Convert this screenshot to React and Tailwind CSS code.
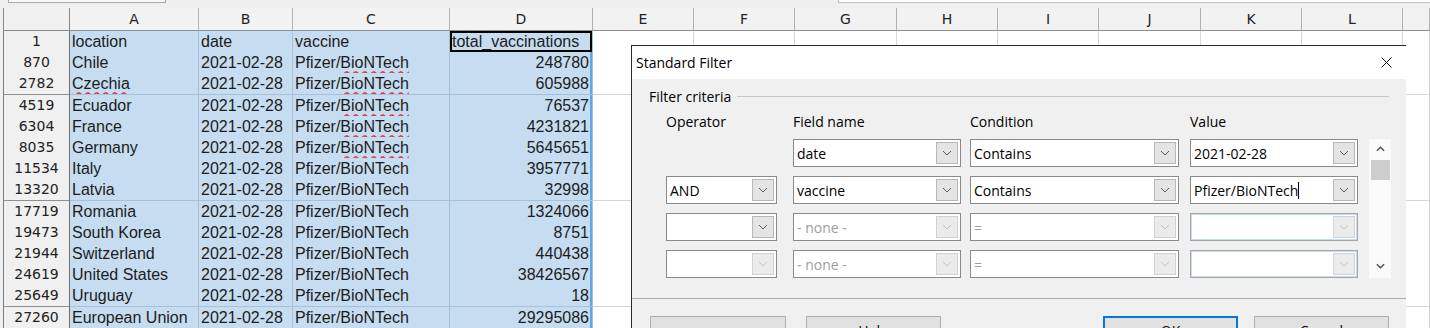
import React from 'react';

const COLS =
  'grid grid-cols-[67px_129px_94px_157px_143px_101px_101px_102px_101px_101px_102px_101px_101px_1fr]';

const LETTERS = ['A', 'B', 'C', 'D', 'E', 'F', 'G', 'H', 'I', 'J', 'K', 'L', ''];

// rows are ~21.2px tall in the shot, so every fifth one gets an extra pixel
const HEIGHTS = ['h-[21px]', 'h-[21px]', 'h-[22px]', 'h-[21px]', 'h-[21px]', 'h-[21px]', 'h-[21px]',
  'h-[22px]', 'h-[21px]', 'h-[21px]', 'h-[21px]', 'h-[21px]', 'h-[22px]', 'h-[21px]'];

const DATA = [
  { n: '870', loc: 'Chile', total: '248780', spell: true },
  { n: '2782', loc: 'Czechia', total: '605988', spell: true, locSpell: true },
  { n: '4519', loc: 'Ecuador', total: '76537', spell: true },
  { n: '6304', loc: 'France', total: '4231821', spell: true },
  { n: '8035', loc: 'Germany', total: '5645651', spell: true },
  { n: '11534', loc: 'Italy', total: '3957771' },
  { n: '13320', loc: 'Latvia', total: '32998' },
  { n: '17719', loc: 'Romania', total: '1324066' },
  { n: '19473', loc: 'South Korea', total: '8751' },
  { n: '21944', loc: 'Switzerland', total: '440438' },
  { n: '24619', loc: 'United States', total: '38426567' },
  { n: '25649', loc: 'Uruguay', total: '18' },
  { n: '27260', loc: 'European Union', total: '29295086' },
];

const SEL = 'bg-[#c6dcf0] border-r border-b border-[#a9c1d8] flex items-center px-[2px] overflow-hidden whitespace-nowrap';
const WAVY = 'underline decoration-wavy decoration-[#e0393e] underline-offset-[3px]';

function RowHead({ children }) {
  return (
    <div className="bg-[#f0f0f0] border-l border-b border-r border-l-[#7a7a7a] border-b-[#8f8f8f] border-r-[#6f6f6f] flex items-center justify-center font-['DejaVu_Sans',sans-serif] text-[14px] text-[#222]">
      {children}
    </div>
  );
}

function BlankCells() {
  return Array.from({ length: 9 }).map((_, i) => (
    <div key={i} className="bg-white border-r border-b border-[#d6d6d6]" />
  ));
}

function Chevron({ color = '#5e5e5e', up = false, w = 10, sw = 1 }) {
  return (
    <svg width={w} height="6" viewBox="0 0 10 6" fill="none">
      <polyline
        points={up ? '1,5 5,1 9,5' : '1,1 5,5 9,1'}
        stroke={color}
        strokeWidth={sw}
      />
    </svg>
  );
}

function Combo({ value, width, muted, disabled, blue, caret }) {
  return (
    <div
      className={`${width} h-[28px] flex bg-white border ${
        blue ? 'border-[#a6a6a6] shadow-[inset_0_0_0_1px_#c8dbf1]' : 'border-[#8a8a8a]'
      }`}
    >
      <div className={`flex-1 flex items-center pl-[3px] ${muted ? 'text-[#9d9d9d]' : 'text-black'}`}>
        {value}
        {caret && <span className="w-px h-[17px] bg-black" />}
      </div>
      <div
        className={`w-[22px] my-[2px] mr-[2px] flex items-center justify-center border ${
          disabled ? 'border-[#d2d2d2] bg-[#ebebeb]' : 'border-[#b7b7b7] bg-[#e4e4e4]'
        }`}
      >
        <Chevron color={disabled ? '#c4c4c4' : '#5e5e5e'} />
      </div>
    </div>
  );
}

function Dialog() {
  return (
    <div className="absolute left-[631px] top-[45px] w-[775px] h-[300px] bg-[#f0f0f0] border-l border-t border-[#2a2a2a] font-['Open_Sans',sans-serif] text-[14px] text-black">
      <div className="h-[33px] bg-white flex items-center justify-between pl-[4px] pr-[14px]">
        <span>Standard Filter</span>
        <svg width="11" height="11" viewBox="0 0 11 11">
          <path d="M0.5 0.5 L10.5 10.5 M10.5 0.5 L0.5 10.5" stroke="#111" strokeWidth="1" />
        </svg>
      </div>

      <div className="pt-[9px]">
        <div className="h-[16px] flex items-center gap-[6px] pl-[17px] pr-[17px]">
          <span>Filter criteria</span>
          <div className="flex-1 h-px bg-[#c6c6c6]" />
        </div>

        <div className="ml-[34px] mt-[8px] grid grid-cols-[127px_177px_220px_179px_22px] grid-rows-[18px_28px_28px_28px_28px] gap-y-[9px]">
          <div className="flex items-center">Operator</div>
          <div className="flex items-center">Field name</div>
          <div className="flex items-center">Condition</div>
          <div className="flex items-center">Value</div>
          <div />

          <div className="col-start-5 row-start-2 row-span-4 bg-[#fafafa] flex flex-col items-center">
            <div className="h-[20px] flex items-center justify-center">
              <Chevron up color="#505050" w={9} sw={1.6} />
            </div>
            <div className="mt-px w-[19px] h-[20px] bg-[#cdcdcd]" />
            <div className="flex-1" />
            <div className="h-[25px] flex items-center justify-center">
              <Chevron color="#505050" w={9} sw={1.6} />
            </div>
          </div>

          <div />
          <Combo width="w-[168px]" value="date" />
          <Combo width="w-[209px]" value="Contains" />
          <Combo width="w-[168px]" value="2021-02-28" />

          <Combo width="w-[111px]" value="AND" />
          <Combo width="w-[168px]" value="vaccine" />
          <Combo width="w-[209px]" value="Contains" />
          <Combo width="w-[168px]" value="Pfizer/BioNTech" caret />

          <Combo width="w-[111px]" value="" />
          <Combo width="w-[168px]" value="- none -" muted disabled />
          <Combo width="w-[209px]" value="=" muted disabled />
          <Combo width="w-[168px]" value="" blue disabled />

          <Combo width="w-[111px]" value="" disabled />
          <Combo width="w-[168px]" value="- none -" muted disabled />
          <Combo width="w-[209px]" value="=" muted disabled />
          <Combo width="w-[168px]" value="" blue disabled />
        </div>

        <div className="mt-[20px] h-px bg-[#ababab]" />

        <div className="mt-[17px] flex justify-between pl-[18px] pr-[17px]">
          <div className="flex gap-[20px]">
            <button className="w-[136px] h-[28px] bg-[#e1e1e1] border border-[#adadad] flex items-center justify-end pr-[12px] text-[10px]">
              ▼
            </button>
            <button className="w-[135px] h-[28px] bg-[#e1e1e1] border border-[#adadad]">Help</button>
          </div>
          <div className="flex gap-[16px]">
            <button className="w-[135px] h-[28px] bg-[#e1e1e1] border-2 border-[#0078d7]">OK</button>
            <button className="w-[135px] h-[28px] bg-[#e1e1e1] border border-[#adadad]">Cancel</button>
          </div>
        </div>
      </div>
    </div>
  );
}

export default function App() {
  return (
    <div className="relative w-[1430px] h-[328px] overflow-hidden bg-[#efefef] font-['Liberation_Sans',Arial,sans-serif] text-[16px] text-[#1c1c1c]">
      <div className="h-[8px] flex items-start">
        <div className="ml-[8px] w-[158px] h-[3px] bg-[#f8f8f8] border border-t-0 border-[#a8a8a8]" />
        <div className="ml-auto w-[592px] h-[3px] bg-white border-b border-l border-[#c2c2c2]" />
      </div>

      <div className="pl-[3px]">
        <div className={`${COLS} h-[23px]`}>
          <div className="bg-[#f0f0f0] border-l border-r border-b border-[#8a8a8a]" />
          {LETTERS.map((l, i) => (
            <div
              key={i}
              className="bg-[#f2f2f2] border-r border-b border-r-[#b1b1b1] border-b-[#8d8d8d] flex items-center justify-center font-['DejaVu_Sans',sans-serif] text-[14px] text-[#222]"
            >
              {l}
            </div>
          ))}
        </div>

        <div className={`${COLS} ${HEIGHTS[0]}`}>
          <RowHead>1</RowHead>
          <div className={SEL}>location</div>
          <div className={SEL}>date</div>
          <div className={SEL}>vaccine</div>
          <div className={`${SEL} shadow-[inset_0_0_0_2px_#000]`}>total_vaccinations</div>
          <BlankCells />
        </div>

        {DATA.map((r, i) => (
          <div key={r.n} className={`${COLS} ${HEIGHTS[i + 1]}`}>
            <RowHead>{r.n}</RowHead>
            <div className={SEL}>
              {r.locSpell ? <span className={WAVY}>{r.loc}</span> : r.loc}
            </div>
            <div className={SEL}>2021-02-28</div>
            <div className={SEL}>
              Pfizer/{r.spell ? <span className={WAVY}>BioNTech</span> : 'BioNTech'}
            </div>
            <div className={`${SEL} justify-end pr-[3px] shadow-[inset_-2px_0_0_#63a6e4]`}>{r.total}</div>
            <BlankCells />
          </div>
        ))}
      </div>

      <Dialog />
    </div>
  );
}
